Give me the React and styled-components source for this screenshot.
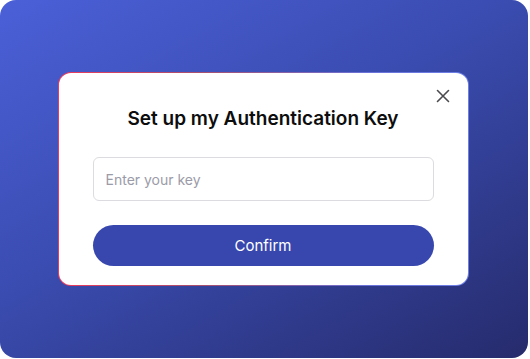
import React from 'react'
import styled, { createGlobalStyle } from 'styled-components';

const GlobalStyle = createGlobalStyle`
    html, body{
        margin: 0;
        padding: 0;
        background: #ffffff;
    }
    body{
        font-family: Inter, "Noto Sans", sans-serif;
    }
`;

function CloseIcon() {
    return (
        <svg width="14" height="14" viewBox="0 0 14 14" fill="none">
            <path d="M1.5 1.5L12.5 12.5M12.5 1.5L1.5 12.5" stroke="#4a4a4f" strokeWidth="1.6" strokeLinecap="round"/>
        </svg>
    )
}

function App() {
    return (
        <>
            <GlobalStyle />
            <Backdrop>
                <ModalBorder>
                    <Modal>
                        <CloseButton aria-label="Close">
                            <CloseIcon />
                        </CloseButton>
                        <Title>Set up my Authentication Key</Title>
                        <KeyInput placeholder="Enter your key" />
                        <ConfirmButton>Confirm</ConfirmButton>
                    </Modal>
                </ModalBorder>
            </Backdrop>
        </>
    )
}

const Backdrop = styled.div`
    width: 528px;
    height: 358px;
    border-radius: 16px;
    background: linear-gradient(150deg, #4b60d8 0%, #3a4cb0 45%, #262b6c 100%);
    display: flex;
    align-items: center;
    justify-content: center;
    box-sizing: border-box;
`;

const ModalBorder = styled.div`
    width: 411px;
    padding: 1px;
    border-radius: 13px;
    background: linear-gradient(90deg, #ec3a5c 0%, #a8506f 35%, #6a72d8 75%, #6d7fe6 100%);
    box-sizing: border-box;
    margin-left: -2px;
`;

const Modal = styled.div`
    position: relative;
    background: #ffffff;
    border-radius: 12px;
    padding: 34px 34px 19px;
    display: flex;
    flex-direction: column;
    align-items: center;
`;

const CloseButton = styled.button`
    position: absolute;
    top: 13px;
    right: 15px;
    width: 20px;
    height: 20px;
    padding: 0;
    border: none;
    background: none;
    display: flex;
    align-items: center;
    justify-content: center;
    cursor: pointer;
`;

const Title = styled.h2`
    margin: 0 0 26px;
    font-size: 19px;
    line-height: 24px;
    font-weight: 600;
    color: #0d0d0d;
    letter-spacing: 0;
`;

const KeyInput = styled.input`
    width: 100%;
    height: 44px;
    box-sizing: border-box;
    border: 1px solid #dcdce0;
    border-radius: 6px;
    padding: 0 12px;
    font-family: Inter, "Noto Sans", sans-serif;
    font-size: 14px;
    color: #222;
    outline: none;
    &::placeholder{
        color: #9b9ba8;
    }
`;

const ConfirmButton = styled.button`
    margin-top: 24px;
    width: 100%;
    height: 41px;
    border: none;
    border-radius: 21px;
    background: #3847ae;
    color: #ffffff;
    font-family: Inter, "Noto Sans", sans-serif;
    font-size: 15px;
    font-weight: 400;
    cursor: pointer;
`;

export default App;
